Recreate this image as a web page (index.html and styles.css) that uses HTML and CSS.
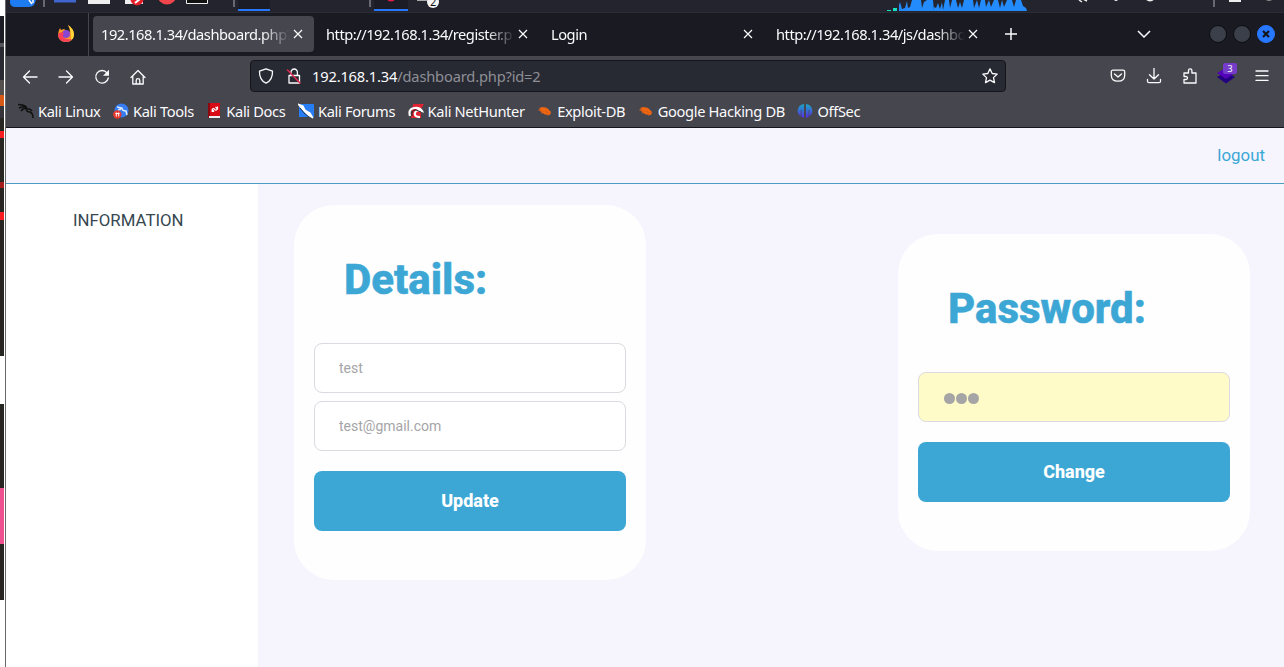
FILE: index.html
```html
<!DOCTYPE html>
<html lang="en">
<head>
<meta charset="utf-8">
<title>Dashboard</title>
<link rel="stylesheet" href="styles.css">
</head>
<body>
<div class="screen">
  <div class="backdrop"></div>
  <div class="window">
    <div class="panel">
      <svg width="1278" height="13" viewBox="6 0 1278 13">
        <path d="M10 0h26l-2 5q-2 2-6 2H15q-4 0-5-4z" fill="#1e7cf2"/><path d="M29 0l3 4M33 0v3" stroke="#fff" stroke-width="1.5"/>
        <path d="M44 0v7M234 0v7M370 0v7M1214 0v7" stroke="#8b8d95" stroke-width="1.3"/>
        <path d="M54 0h22v2.500H54z" fill="#3f66cf"/><path d="M88 0h22v4H88z" fill="#eee"/><path d="M125 0h18v4h-18z" fill="#eee"/>
        <circle cx="137" cy="-1" r="6.500" fill="#e3202c"/><path d="M135 3l5-4" stroke="#fff" stroke-width="2"/>
        <circle cx="167" cy="-5" r="9.500" fill="#f0454a"/><path d="M186.500 0v3.500h21V0" fill="#111" stroke="#eee"/>
        <path d="M238 0h32v10h-32zM374 0h34v10h-34z" fill="#1b1c25"/><path d="M238 9h32v2h-32zM374 9h34v2h-34z" fill="#2777ff"/>
        <circle cx="391" cy="-3" r="4.500" fill="#e01c48"/><path d="M417 0h10v1h-10z" fill="#aaa"/>
        <circle cx="433" cy="2" r="6" fill="#f5f5f5"/><text class="count" x="430" y="6">2</text>
        <path d="M887 10h4v1h-4zM893 8h4v3h-4z" fill="#18e0c5"/>
        <path d="M899 11V5l1-3 2 7 3-1 2-7 1 7 2-1 2-7h9l1 8 2-6 3-2h6l1 11zM934 11V7l2 1 2-5 2 6 2-7 1 8 2-10h4l1 8 2-8h4l2 8 2-6 2 6 2-8h9l1 8 3-8 2 8 2-8h4l1 7 3-7 2 7 3-7h4l2 8 2-8 2 7 3-7h5l2 7 2-7h5l2 6 3 2 1 3z" fill="#248bfc"/>
        <path d="M1079 0l3 2M1083-1l4 2" stroke="#eee" stroke-width="1.500"/><circle cx="1116" cy="-1" r="2" fill="#eee"/><circle cx="1150" cy="-4" r="5.500" fill="#eee"/><path d="M1229 0h12v2h-12z" fill="#eee"/><circle cx="1269" cy="-3" r="4" fill="#888"/>
      </svg>
    </div>
    <div class="tabs">
      <div class="pinned">
        <svg width="16" height="18" viewBox="0 0 16 18"><path d="M10 0q6 4 6 10-.500 6.500-8 7Q.500 16.500 0 10 .200 6 2 3l1 2 3-1q2 2 6 3 0-4-2-7z" fill="#ff9a24"/><path d="M10 0q6 4 6 10-.500 4-3 5.500Q14 6 10 0z" fill="#ffd73b"/><circle cx="8" cy="9" r="4" fill="#8746cf"/><path d="M0 9q0 7.500 8 8 4 0 6-3-6 1-9-2-1-2 1-4-3-2-6 1z" fill="#f9405a"/></svg>
      </div>
      <div class="tab tab-active"><span class="tab-title">192.168.1.34/dashboard.php?</span><svg class="x" viewBox="0 0 10 10"><path d="M1 1l8 8M9 1L1 9"/></svg></div>
      <div class="tab"><span class="tab-title">http://192.168.1.34/register.p</span><svg class="x" viewBox="0 0 10 10"><path d="M1 1l8 8M9 1L1 9"/></svg></div>
      <div class="tab"><span class="tab-title">Login</span><svg class="x" viewBox="0 0 10 10"><path d="M1 1l8 8M9 1L1 9"/></svg></div>
      <div class="tab"><span class="tab-title">http://192.168.1.34/js/dashbo</span><svg class="x" viewBox="0 0 10 10"><path d="M1 1l8 8M9 1L1 9"/></svg></div>
      <svg class="plus" width="12" height="12" viewBox="0 0 12 12"><path d="M6 0v12M0 6h12"/></svg>
      <svg class="chevron" width="14" height="8" viewBox="0 0 14 8"><path d="M1 1l6 6 6-6"/></svg>
      <div class="controls"><i class="dot"></i><i class="dot"></i><i class="dot dot-close"><svg width="8" height="8" viewBox="0 0 8 8"><path d="M1 1l6 6M7 1L1 7"/></svg></i></div>
    </div>
    <div class="toolbar">
      <div class="nav">
        <svg class="ico" viewBox="0 0 16 16"><path d="M15 8H1.500M7.500 2l-6 6 6 6"/></svg>
        <svg class="ico" viewBox="0 0 16 16"><path d="M1 8h13.500M8.500 2l6 6-6 6"/></svg>
        <svg class="ico" viewBox="0 0 16 16"><path d="M13 3.800A6.300 6.300 0 1 0 14.300 9"/><path class="solid" d="M15 .800v6H9z"/></svg>
        <svg class="ico" viewBox="0 0 16 16"><path d="M1 8.500l7-7 7 7M2.800 7v8h10.400V7M6.200 15v-3.500q0-1.800 1.800-1.800t1.800 1.800V15"/></svg>
      </div>
      <div class="urlbar">
        <svg class="ico" viewBox="0 0 16 16"><path d="M8 .800l6.500 2.400q.3 8.800-6.500 12Q1.200 12 1.500 3.200z"/></svg>
        <svg class="ico lock" viewBox="0 0 16 16"><path d="M3 7.500h10.500V15H3zM5 7V4.200a3.200 3.200 0 0 1 6.400 0V7"/><path class="slash" d="M1.500 2l12.500 13"/></svg>
        <span class="url">192.168.1.34<span class="path">/dashboard.php?id=2</span></span>
        <svg class="ico star" viewBox="0 0 16 16"><path d="M8 .900l2.200 4.600 5 .600-3.700 3.500 1 5L8 12.100l-4.500 2.500 1-5L.800 6.100l5-.600z"/></svg>
      </div>
      <div class="tools">
        <svg class="ico" viewBox="0 0 16 16"><path d="M3 2.200h10q1.700 0 1.700 1.600v3.400q0 6-6.700 6t-6.700-6V3.800Q1.300 2.200 3 2.200zM4.500 6L8 9l3.500-3"/></svg>
        <svg class="ico" viewBox="0 0 16 16"><path d="M8 0v11M3.500 6.700L8 11l4.500-4.300M1.500 11.500v1.700q0 1.500 1.500 1.500h10q1.500 0 1.500-1.500v-1.700"/></svg>
        <svg class="ico" viewBox="0 0 16 16"><path d="M2 5h4.500V2.500a1.700 1.700 0 0 1 3.400 0V5H14v10H2v-3.500h2a1.500 1.500 0 0 0 0-3H2z"/></svg>
        <div class="ext"><svg width="18" height="18" viewBox="0 0 18 18"><path d="M0 10l9-5 9 5-9 6.500z" fill="#23007d"/><path d="M0 6l9-5 9 5-9 6z" fill="#5404b8"/></svg><span class="badge">3</span></div>
        <svg class="ico" viewBox="0 0 16 16"><path d="M2 3h12M2 7.700h12M2 12.400h12"/></svg>
      </div>
    </div>
    <div class="bookmarks">
      <span class="bm"><svg viewBox="0 0 16 16"><path d="M0 1.500q6 0 9 3M1 5q4-2 7-1M3 8q2-3 5-3 0 4 4 4 3 1 3 6M8 6q4-1 6 2" fill="none" stroke="#111" stroke-width="1.500"/></svg>Kali Linux</span>
      <span class="bm"><svg viewBox="0 0 16 16"><circle cx="8.500" cy="7.500" r="7" fill="#367bf0"/><path d="M4 4l5 1q0 3 4 3l1 4M5 7l3-1" fill="none" stroke="#dcecff" stroke-width="1.500"/><circle cx="4.300" cy="11.500" r="4.200" fill="#e8372c"/><path d="M3.300 9.500v4M5.700 9.500v4M2.500 10.500h4" stroke="#fff"/></svg>Kali Tools</span>
      <span class="bm"><svg viewBox="0 0 16 16"><path d="M2 0h12v13H2z" fill="#d80c17"/><path d="M2 0h2v15H2z" fill="#8d0710"/><path d="M3 13h11v2H3z" fill="#eee"/><path d="M11.500 3.500v2.500q-1.500 2-2.800.300T6.200 6.500v2.500M6.200 6.500l2 2M11.500 6l-2-2" fill="none" stroke="#fff" stroke-width="1.200"/></svg>Kali Docs</span>
      <span class="bm"><svg viewBox="0 0 16 16"><path d="M1 1h15v13H1z" fill="#267df4"/><path d="M0 1l5 2 2 4 5 3 3 5-5-3-4-4z" fill="#fff" stroke="#fff" stroke-width="1.200"/><path d="M2 5l5 6 4 3" fill="none" stroke="#222" stroke-width=".800"/></svg>Kali Forums</span>
      <span class="bm"><svg viewBox="0 0 16 16"><path d="M5 1h11l-3 5v9H3z" fill="#df2331"/><path d="M2 13Q0 6 6 5t8 3q-6-2-7 2t5 4" fill="none" stroke="#fff" stroke-width="2.200"/><path d="M4 13q-1-6 4-6l5 2" fill="none" stroke="#222"/></svg>Kali NetHunter</span>
      <span class="bm"><svg viewBox="0 0 16 16"><path d="M2 6l3-2 5 1 4 4-1 3-5-.500-4-2.500z" fill="#f26711"/><path d="M3 4l2 7M8 4l3 9M1 7l13 3" stroke="#d95c16" stroke-width=".700"/></svg>Exploit-DB</span>
      <span class="bm"><svg viewBox="0 0 16 16"><path d="M2 6l3-2 5 1 4 4-1 3-5-.500-4-2.500z" fill="#f26711"/><path d="M3 4l2 7M8 4l3 9M1 7l13 3" stroke="#d95c16" stroke-width=".700"/></svg>Google Hacking DB</span>
      <span class="bm"><svg viewBox="0 0 16 16"><defs><linearGradient id="off" x2="0" y2="1"><stop stop-color="#17a8c9"/><stop offset="1" stop-color="#5a2be0"/></linearGradient></defs><path d="M7 1v14Q1 13 .500 8 1 2 7 1zM9 1v14Q15 13 15.500 8 15 2 9 1z" fill="url(#off)"/><path d="M4 7v8M12 7v8" stroke="#46464d" stroke-width=".700"/></svg>OffSec</span>
    </div>
    <div class="page">
      <header class="topbar"><a class="logout">logout</a></header>
      <div class="body">
        <aside class="side">INFORMATION</aside>
        <main class="main">
          <form class="card">
            <h1 class="title">Details:</h1>
            <input class="field" placeholder="test">
            <input class="field" placeholder="test@gmail.com">
            <button class="btn" type="button">Update</button>
          </form>
          <form class="card">
            <h1 class="title">Password:</h1>
            <div class="field field-filled"><i class="mask"></i><i class="mask"></i><i class="mask"></i></div>
            <button class="btn" type="button">Change</button>
          </form>
        </main>
      </div>
    </div>
  </div>
</div>
</body>
</html>
```
FILE: styles.css
```css
* { box-sizing: border-box; }
body { margin: 0; overflow: hidden; font-family: "Noto Sans", sans-serif; font-size: 14.67px; color: #fbfbfe; }
.screen { display: grid; grid-template-columns: 6px 1278px; height: 667px; }
.backdrop {
  border-right: 1px solid #68686b;
  box-shadow: inset -1px 0 #fff;
  background: linear-gradient(#fff 16px, #1b1c24 16px 43px, #55555b 43px 47px, #292a31 47px 80px, #55504e 80px 95px, #d75b16 95px 106px, #35343a 106px 118px, #272622 118px 131px, #f91d22 131px 138px, #272622 138px 182px, #a51c1c 182px 188px, #272622 188px 212px, #f91d22 212px 220px, #272622 220px 356px, #fff 356px 404px, #272622 404px 488px, #f0508f 488px 544px, #272622 544px 600px, #fff 600px);
}
.window { display: flex; flex-direction: column; min-width: 0; }
.panel { height: 13px; background: #23242d; overflow: hidden; border-bottom: 1px solid #2b2c34; }
.panel svg { display: block; }
.count { font: 11px "Noto Sans", sans-serif; fill: #111; }
.tabs { height: 43px; background: #1a1a22; display: flex; align-items: center; padding-bottom: 1px; }
.pinned { width: 83px; height: 43px; border-right: 1px solid #45454d; display: flex; align-items: center; justify-content: flex-end; padding-right: 14px; }
.tab { width: 221px; height: 36px; margin-left: 4px; padding: 0 11px 0 8px; border-radius: 4px; display: flex; align-items: center; gap: 3px; }
.tab-active { background: #46464e; }
.tab-title { flex: 1; overflow: hidden; white-space: nowrap; letter-spacing: -.47px; mask-image: linear-gradient(to left, transparent, #000 28px); }
.x { width: 10px; height: 10px; margin-bottom: 1px; }
svg { flex: none; }
.x path, .plus path, .chevron path { fill: none; stroke: #fbfbfe; stroke-width: 1.2; }
.plus { margin-left: 16px; }
.plus path, .chevron path { stroke-width: 1.5; }
.chevron { margin-left: 120px; }
.controls { margin-left: auto; display: flex; gap: 6px; padding-right: 9px; }
.dot { width: 18px; height: 18px; border-radius: 50%; background: #3a3f4a; border: 1px solid #0c0c12; }
.dot-close { background: #2777ff; border-color: #2777ff; display: flex; align-items: center; justify-content: center; }
.dot-close path { stroke: #14151c; stroke-width: 2.2; }
.toolbar { height: 40px; background: #46464e; display: flex; align-items: center; }
.ico { width: 16px; height: 16px; fill: none; stroke: #fbfbfe; stroke-width: 1.3; stroke-linejoin: round; stroke-linecap: round; }
.ico .solid { fill: #fbfbfe; stroke: none; }
.ico .slash { stroke: #e22850; stroke-width: 1.5; }
.nav { width: 244px; display: flex; gap: 20px; padding: 1px 0 0 16px; }
.urlbar { width: 756px; height: 32px; background: #282a33; border: 1px solid #15161d; border-radius: 4px; display: flex; align-items: center; padding: 0 7px; }
.lock { margin-left: 12px; }
.url { margin-left: 10px; flex: 1; letter-spacing: -.17px; }
.path { color: #8e8f96; }
.tools { margin-left: auto; display: flex; gap: 20px; padding-right: 14px; align-items: center; }
.ext { width: 16px; height: 18px; position: relative; }
.ext svg { display: block; margin-left: -1px; }
.badge { position: absolute; left: 5px; top: -4px; width: 14px; height: 11px; background: #743cc8; border-radius: 2px; font-size: 9.5px; line-height: 11px; text-align: center; }
.bookmarks { height: 32px; background: #46464e; border-bottom: 1px solid #15151c; display: flex; gap: 12.5px; padding: 0 0 2px 12px; align-items: center; letter-spacing: -.35px; }
.bm { display: flex; gap: 4px; align-items: center; white-space: nowrap; }
.bm svg { width: 16px; height: 16px; }
.page { flex: 1; background: #f6f5fe; display: flex; flex-direction: column; font-family: Roboto, sans-serif; }
.topbar { height: 56px; border-bottom: 1px solid #4a9dc4; display: flex; align-items: center; justify-content: flex-end; padding: 0 19px 2px 0; }
.logout { font-size: 16.9px; color: #3ca7d5; }
.body { flex: 1; display: flex; }
.side { width: 252px; background: #fff; color: #36474f; font-size: 16.8px; line-height: 20px; padding: 26px 0 0 67px; }
.main { flex: 1; display: flex; justify-content: space-between; align-items: center; padding: 0 34px 66px 36px; }
.card { width: 352px; background: #fefefe; border-radius: 40px; padding: 51px 20px 49px; }
.title { margin: 0 0 39px 30px; color: #3ca7d5; font-size: 42px; line-height: 48px; font-weight: 800; -webkit-text-stroke: .5px #3ca7d5; }
.field { display: block; width: 100%; height: 50px; margin-bottom: 8px; border: 1px solid #dadae0; border-radius: 8px; padding: 0 24px; font: 14px Roboto, sans-serif; background: #fff; outline: none; }
.field::placeholder { color: #a5a5a7; opacity: 1; }
.field-filled { background: #fffbc8; display: flex; align-items: center; gap: 1.2px; padding: 2px 24px 0 25px; }
.mask { width: 11px; height: 11px; border-radius: 50%; background: #a5a5a5; }
.btn { width: 100%; height: 60px; margin-top: 20px; padding: 0 0 2px; display: block; border: 0; border-radius: 8px; background: #3ca7d5; color: #fff; font: 800 18px Roboto, sans-serif; }
```
